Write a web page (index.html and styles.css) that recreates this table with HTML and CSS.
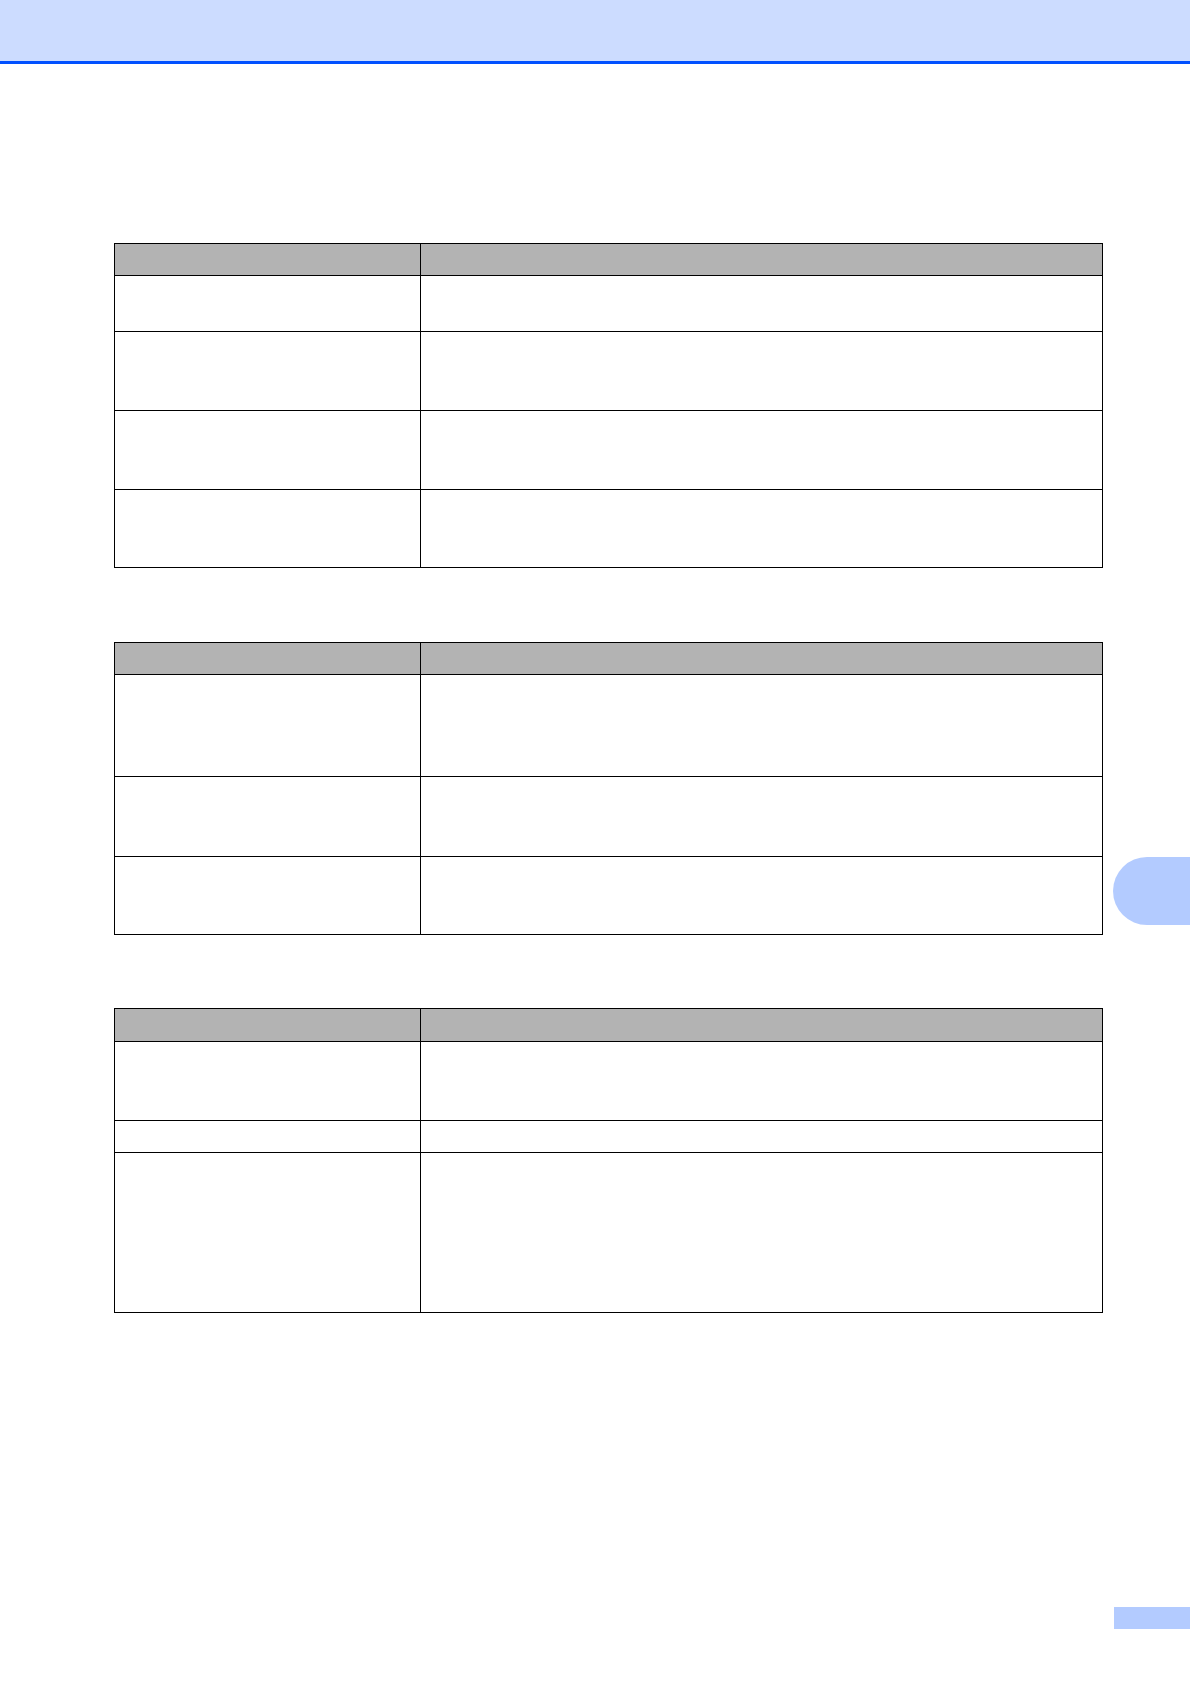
FILE: index.html
```html
<!DOCTYPE html>
<html>
<head>
<meta charset="utf-8">
<link rel="stylesheet" href="styles.css">
</head>
<body>
<header class="topbar"></header>
<main class="content">
  <section class="tbl t1">
    <div class="row head"><div class="cell"></div><div class="cell"></div></div>
    <div class="row h56"><div class="cell"></div><div class="cell"></div></div>
    <div class="row h79"><div class="cell"></div><div class="cell"></div></div>
    <div class="row h79"><div class="cell"></div><div class="cell"></div></div>
    <div class="row h78"><div class="cell"></div><div class="cell"></div></div>
  </section>
  <section class="tbl t2">
    <div class="row head"><div class="cell"></div><div class="cell"></div></div>
    <div class="row h102"><div class="cell"></div><div class="cell"></div></div>
    <div class="row h80"><div class="cell"></div><div class="cell"></div></div>
    <div class="row h78"><div class="cell"></div><div class="cell"></div></div>
  </section>
  <section class="tbl t3">
    <div class="row head head32"><div class="cell"></div><div class="cell"></div></div>
    <div class="row h79"><div class="cell"></div><div class="cell"></div></div>
    <div class="row h32"><div class="cell"></div><div class="cell"></div></div>
    <div class="row h160"><div class="cell"></div><div class="cell"></div></div>
  </section>
</main>
<div class="side-tab"></div>
<div class="page-box"></div>
</body>
</html>
```

FILE: styles.css
```css
html, body {
  margin: 0;
  padding: 0;
  background: #ffffff;
  font-family: "Liberation Sans", Arial, sans-serif;
}

body {
  position: relative;
  width: 1190px;
  min-height: 1684px;
  overflow: hidden;
}

.topbar {
  height: 61px;
  background: #ccdcff;
  border-bottom: 3px solid #0050ff;
}

.content {
  display: flex;
  flex-direction: column;
  padding-left: 114px;
  padding-top: 179px;
}

.tbl {
  width: 989px;
  box-sizing: border-box;
  border: 1px solid #000000;
}

.t2 { margin-top: 74px; }
.t3 { margin-top: 73px; }

.row {
  display: grid;
  grid-template-columns: 305px 1fr;
  box-sizing: border-box;
  border-top: 1px solid #000000;
}

.row .cell + .cell {
  border-left: 1px solid #000000;
}

.row.head {
  border-top: none;
  height: 31px;
  background: #b3b3b3;
}

.row.head32 { height: 32px; }

.h32 { height: 32px; }
.h56 { height: 56px; }
.h78 { height: 78px; }
.h79 { height: 79px; }
.h80 { height: 80px; }
.h102 { height: 102px; }
.h160 { height: 160px; }

.side-tab {
  position: absolute;
  top: 857px;
  left: 1113px;
  width: 77px;
  height: 68px;
  background: #b3cbff;
  border-radius: 34px 0 0 34px;
}

.page-box {
  position: absolute;
  top: 1607px;
  left: 1114px;
  width: 76px;
  height: 22px;
  background: #b3cbff;
}
```
